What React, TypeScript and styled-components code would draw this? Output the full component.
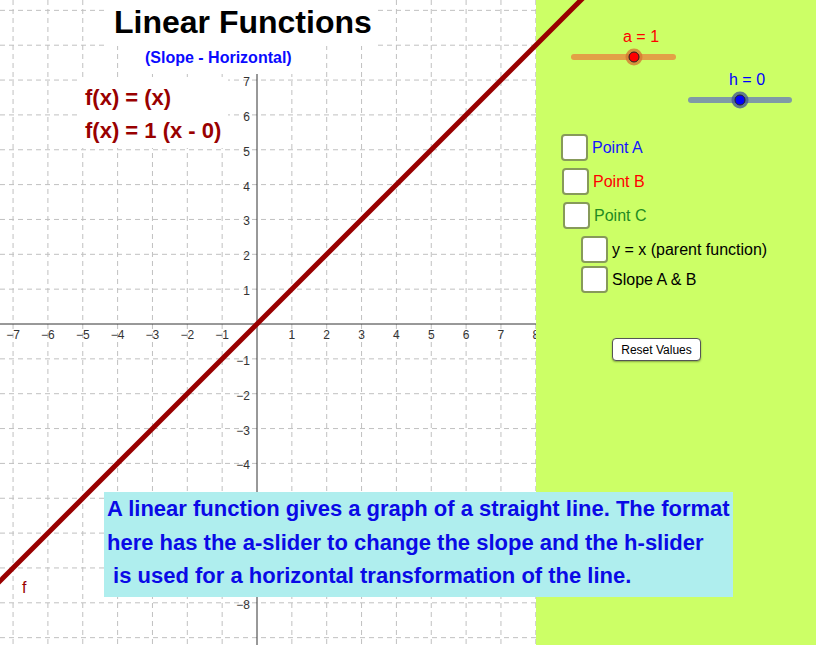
import React from 'react';
import styled, { createGlobalStyle } from 'styled-components';

const ORIGIN_X = 257;
const ORIGIN_Y = 324;
const UNIT = 34.85;
const GRAPH_W = 536;
const GRAPH_H = 645;

const GlobalStyle = createGlobalStyle`
  html, body {
    margin: 0;
    padding: 0;
    background: #ffffff;
  }
  body {
    font-family: "Liberation Sans", Arial, sans-serif;
  }
`;

const range = (from: number, to: number) => {
  const out: number[] = [];
  for (let i = from; i <= to; i++) out.push(i);
  return out;
};

const fmt = (n: number) => (n < 0 ? `\u2212${Math.abs(n)}` : `${n}`);

// y labels that sit under the info box are not drawn
const hiddenY = [-5, -6, -7];

function CoordinateGrid() {
  const xs = range(-7, 8).filter((k) => k !== 0);
  const ys = range(-9, 9).filter((k) => k !== 0);

  return (
    <GridSvg width={GRAPH_W} height={GRAPH_H}>
      <defs>
        <clipPath id="graphClip">
          <rect x={0} y={0} width={GRAPH_W} height={GRAPH_H} />
        </clipPath>
      </defs>
      <g clipPath="url(#graphClip)">
        {xs.map((k) => (
          <line
            key={`gx${k}`}
            x1={ORIGIN_X + k * UNIT}
            x2={ORIGIN_X + k * UNIT}
            y1={0}
            y2={GRAPH_H}
            stroke="#c0c0c0"
            strokeDasharray="5 4"
          />
        ))}
        {ys.map((k) => (
          <line
            key={`gy${k}`}
            x1={0}
            x2={GRAPH_W}
            y1={ORIGIN_Y - k * UNIT}
            y2={ORIGIN_Y - k * UNIT}
            stroke="#c0c0c0"
            strokeDasharray="5 4"
          />
        ))}
        <line x1={0} x2={GRAPH_W} y1={ORIGIN_Y} y2={ORIGIN_Y} stroke="#333" strokeWidth={1} />
        <line x1={ORIGIN_X} x2={ORIGIN_X} y1={0} y2={GRAPH_H} stroke="#333" strokeWidth={1} />
        {xs.map((k) => (
          <AxisLabel key={`lx${k}`} x={ORIGIN_X + k * UNIT} y={ORIGIN_Y + 15} textAnchor="middle">
            {fmt(k)}
          </AxisLabel>
        ))}
        {ys
          .filter((k) => k <= 7 && k >= -8 && !hiddenY.includes(k))
          .map((k) => (
            <AxisLabel key={`ly${k}`} x={ORIGIN_X - 7} y={ORIGIN_Y - k * UNIT + 6} textAnchor="end">
              {fmt(k)}
            </AxisLabel>
          ))}
        <CurveName x={22} y={593}>
          f
        </CurveName>
      </g>
      <line
        x1={-60}
        y1={ORIGIN_Y + ORIGIN_X + 60}
        x2={600}
        y2={ORIGIN_Y - (600 - ORIGIN_X)}
        stroke="#990000"
        strokeWidth={5}
      />
    </GridSvg>
  );
}

interface SliderProps {
  name: string;
  value: number;
  indent: number;
  width: number;
  knob: number;
  color: string;
  track: string;
  halo: string;
  gap: number;
}

function Slider(props: SliderProps) {
  const { name, value, indent, width, knob, color, track, halo, gap } = props;
  return (
    <SliderBlock $indent={indent} $gap={gap}>
      <SliderLabel $color={color} $offset={knob - 11}>
        {name} = {value}
      </SliderLabel>
      <Track $width={width} $color={track}>
        <Knob style={{ left: knob }} $fill={color} $halo={halo} />
      </Track>
    </SliderBlock>
  );
}

const options = [
  { label: 'Point A', color: '#1414ff', indent: 25, gap: 31 },
  { label: 'Point B', color: '#ff0000', indent: 26, gap: 7 },
  { label: 'Point C', color: '#228b22', indent: 27, gap: 7 },
  { label: 'y = x (parent function)', color: '#000000', indent: 45, gap: 7 },
  { label: 'Slope A & B', color: '#000000', indent: 45, gap: 3 },
];

export default function App() {
  return (
    <>
      <GlobalStyle />
      <Applet>
        <GraphView>
          <CoordinateGrid />
          <Note $left={108} $top={0} $width={268} $height={46}>
            <Title>Linear Functions</Title>
          </Note>
          <Note $left={122} $top={46} $width={196} $height={28}>
            <Subtitle>(Slope - Horizontal)</Subtitle>
          </Note>
          <Note $left={78} $top={77} $width={150} $height={71}>
            <Equations>
              <div>f(x) = (x)</div>
              <div>f(x) = 1 (x - 0)</div>
            </Equations>
          </Note>
          <InfoBox>
            {'A linear function gives a graph of a straight line. The format\nhere has the a-slider to change the slope and the h-slider\n is used for a horizontal transformation of the line.'}
          </InfoBox>
        </GraphView>
        <SidePanel>
          <Slider
            name="a"
            value={1}
            indent={35}
            width={105}
            knob={63}
            color="#ff0000"
            track="#e2a146"
            halo="rgba(214, 120, 50, 0.8)"
            gap={0}
          />
          <Slider
            name="h"
            value={0}
            indent={152}
            width={104}
            knob={52}
            color="#0000ff"
            track="#7f9aa6"
            halo="rgba(70, 90, 150, 0.8)"
            gap={11}
          />
          <CheckList>
            {options.map((o) => (
              <CheckRow key={o.label} $indent={o.indent} $gap={o.gap}>
                <CheckBox />
                <CheckText $color={o.color}>{o.label}</CheckText>
              </CheckRow>
            ))}
          </CheckList>
          <ResetButton>Reset Values</ResetButton>
        </SidePanel>
      </Applet>
    </>
  );
}

const Applet = styled.div`
  display: flex;
  flex-direction: row;
  width: 816px;
  height: 645px;
  background: #ffffff;
`;

const GraphView = styled.div`
  position: relative;
  z-index: 1;
  flex: 0 0 ${GRAPH_W}px;
  height: ${GRAPH_H}px;
`;

const GridSvg = styled.svg`
  display: block;
  overflow: visible;
`;

const AxisLabel = styled.text`
  font-family: "Liberation Sans", Arial, sans-serif;
  font-size: 12px;
  fill: #333333;
`;

const CurveName = styled.text`
  font-family: "Liberation Sans", Arial, sans-serif;
  font-size: 16px;
  fill: #990000;
`;

const Note = styled.div<{ $left: number; $top: number; $width: number; $height: number }>`
  position: absolute;
  left: ${(p) => p.$left}px;
  top: ${(p) => p.$top}px;
  width: ${(p) => p.$width}px;
  height: ${(p) => p.$height}px;
  background: #ffffff;
  box-sizing: border-box;
`;

const Title = styled.div`
  padding: 5px 0 0 6px;
  font-size: 32px;
  line-height: 34px;
  font-weight: bold;
  color: #000000;
`;

const Subtitle = styled.div`
  padding: 3px 0 0 23px;
  font-size: 16px;
  line-height: 18px;
  font-weight: bold;
  color: #0a0aff;
`;

const Equations = styled.div`
  padding: 4px 0 0 7px;
  font-size: 22px;
  line-height: 33px;
  font-weight: bold;
  color: #990000;
`;

const InfoBox = styled.div`
  position: absolute;
  left: 104px;
  top: 492px;
  width: 629px;
  height: 105px;
  box-sizing: border-box;
  padding: 0 0 0 3px;
  background: #afeeee;
  white-space: pre;
  font-family: "Liberation Sans Narrow", "Liberation Sans", Arial, sans-serif;
  font-size: 22px;
  line-height: 33.5px;
  font-weight: bold;
  color: #0a0ae6;
`;

const SidePanel = styled.div`
  flex: 1;
  display: flex;
  flex-direction: column;
  align-items: flex-start;
  padding-top: 28px;
  background: #ccff66;
`;

const SliderBlock = styled.div<{ $indent: number; $gap: number }>`
  display: flex;
  flex-direction: column;
  margin: ${(p) => p.$gap}px 0 0 ${(p) => p.$indent}px;
`;

const SliderLabel = styled.div<{ $color: string; $offset: number }>`
  padding-left: ${(p) => p.$offset}px;
  font-size: 16px;
  line-height: 18px;
  color: ${(p) => p.$color};
`;

const Track = styled.div<{ $width: number; $color: string }>`
  position: relative;
  width: ${(p) => p.$width}px;
  height: 6px;
  margin-top: 8px;
  border-radius: 3px;
  background: ${(p) => p.$color};
`;

const Knob = styled.span<{ $fill: string; $halo: string }>`
  position: absolute;
  top: 50%;
  width: 11px;
  height: 11px;
  box-sizing: border-box;
  transform: translate(-50%, -50%);
  border-radius: 50%;
  border: 1px solid #222222;
  background: ${(p) => p.$fill};
  box-shadow: 0 0 0 3px ${(p) => p.$halo};
`;

const CheckList = styled.div`
  display: flex;
  flex-direction: column;
`;

const CheckRow = styled.label<{ $indent: number; $gap: number }>`
  display: flex;
  flex-direction: row;
  align-items: center;
  gap: 4px;
  margin: ${(p) => p.$gap}px 0 0 ${(p) => p.$indent}px;
`;

const CheckBox = styled.span`
  width: 27px;
  height: 27px;
  box-sizing: border-box;
  border: 2px solid #879a5a;
  border-radius: 4px;
  background: #ffffff;
`;

const CheckText = styled.span<{ $color: string }>`
  font-size: 16px;
  color: ${(p) => p.$color};
`;

const ResetButton = styled.button`
  margin: 45px 0 0 76px;
  width: 89px;
  height: 23px;
  padding: 0;
  box-sizing: border-box;
  border: 1px solid #555555;
  border-radius: 4px;
  background: #ffffff;
  box-shadow: 0 1px 2px rgba(0, 0, 0, 0.35);
  font-family: "Liberation Sans", Arial, sans-serif;
  font-size: 12px;
  color: #000000;
`;
